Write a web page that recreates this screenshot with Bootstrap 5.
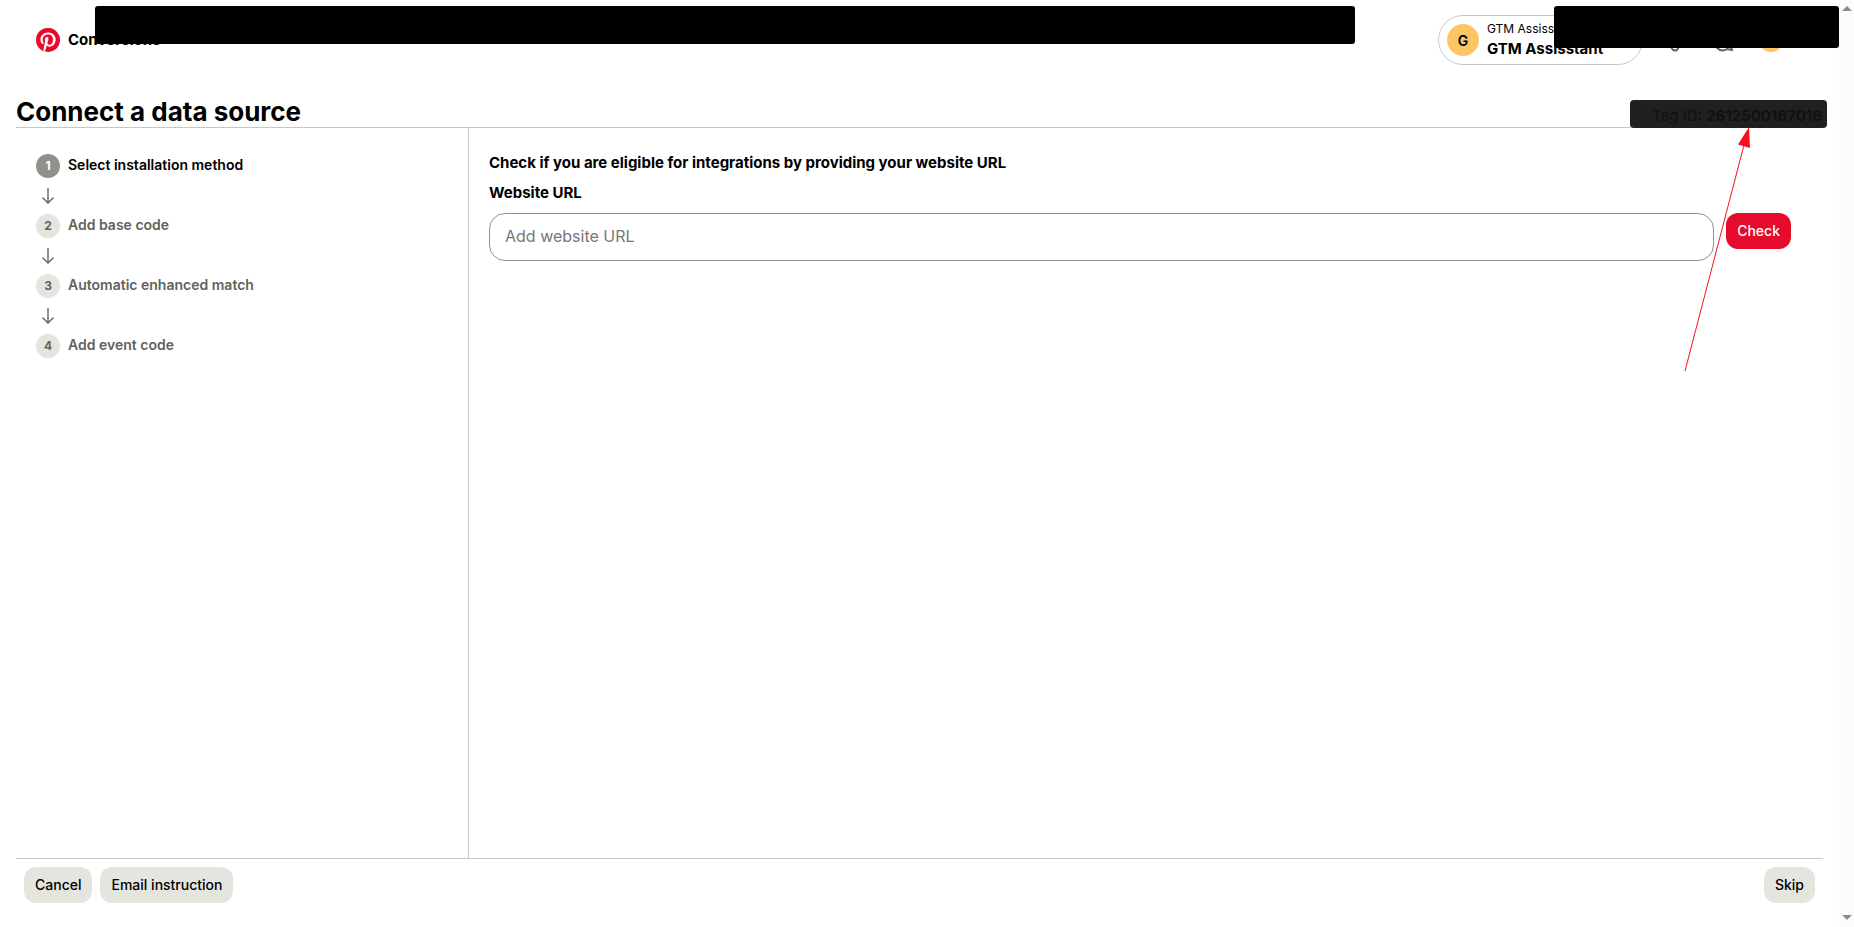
<!DOCTYPE html>
<html lang="en">
<head>
<meta charset="utf-8">
<meta name="viewport" content="width=device-width, initial-scale=1">
<title>Connect a data source</title>
<link href="https://cdn.jsdelivr.net/npm/bootstrap@5.3.0/dist/css/bootstrap.min.css" rel="stylesheet">
<style>
  :root { --line: #c8c8c1; --soft: #e5e5e0; --brand: #e60b2a; --sun: #fbc564; }
  body { font-family: "Inter", "Liberation Sans", sans-serif; color: #000; background: #fff; }
  .strong-text { font-size: 15px; font-weight: 700; line-height: 22px; }
  .topbar { height: 80px; padding-left: 36px; padding-right: 8px; gap: 20px; }
  .topbar-icons { gap: 24px; }
  .account { width: 205px; height: 50px; padding: 0 8px; border: 1px solid var(--line); border-radius: 25px; background: #fff; gap: 8px; }
  .avatar { width: 32px; height: 32px; background: var(--sun); font-size: 14px; font-weight: 600; }
  .avatar-sm { width: 24px; height: 24px; background: var(--sun); }
  .account-owner { font-size: 12px; line-height: 18px; }
  .cover { background: #000; border-radius: 3px; top: 6px; }
  .cover-nav { left: 95px; right: 484px; height: 38px; }
  .cover-user { right: 0; width: 285px; height: 42px; }
  .title-row { height: 48px; border-bottom: 1px solid var(--line); }
  .page-title { font-size: 26px; font-weight: 700; line-height: 30px; }
  .tag-id { width: 197px; height: 28px; margin: 0 -4px -1px 0; padding: 2px 5px 0 0; background: #202020; color: #111; border-radius: 4px; font-size: 15px; line-height: 28px; }
  .steps { width: 453px; padding: 26px 20px; border-right: 1px solid var(--line); }
  .step { height: 24px; font-size: 14px; font-weight: 600; line-height: 22px; color: #62625b; gap: 8px; }
  .step.current { color: #000; }
  .step-no { width: 24px; height: 24px; background: var(--soft); font-size: 12px; font-weight: 700; line-height: 24px; }
  .current .step-no { background: #91918c; color: #fff; }
  .step-arrow { width: 24px; margin: 10px 0; }
  .form-area { padding: 24px 32px 24px 20px; }
  .url-label { margin: 8px 0 9px; }
  .url-row { gap: 12px; }
  .url-input { height: 48px; padding: 0 15px 2px; border: 1px solid #91918c; border-radius: 16px; font-size: 16px; }
  .url-input::placeholder { color: #767676; }
  .action { height: 36px; padding: 0 11px 2px; border: 0; border-radius: 12px; font-size: 14px; font-weight: 500; background: var(--soft); color: #000; }
  .action-primary { background: var(--brand); color: #fff; }
  .actions { padding: 8px 8px 24px; border-top: 1px solid var(--line); }
  .scroll-rail { width: 15px; padding: 6px 0 7px; background: #fcfcfc; }
  .pointer { right: 88px; top: 127px; }
</style>
</head>
<body>
<div class="d-flex min-vh-100">
  <div class="d-flex flex-column flex-grow-1 position-relative">
    <header class="topbar d-flex align-items-center">
      <a href="#" class="d-flex align-items-center gap-2 me-auto text-reset text-decoration-none">
        <svg width="24" height="24" viewBox="0 0 24 24" aria-label="Pinterest" role="img"><circle cx="12" cy="12" r="11.5" fill="#fff"/><path fill="#e60b2a" d="M0 12c0 5.12 3.21 9.5 7.73 11.22-.11-.93-.22-2.47.02-3.55l1.4-5.96s-.35-.73-.35-1.78c0-1.66.96-2.9 2.16-2.9 1.02 0 1.51.76 1.51 1.68 0 1.02-.65 2.56-.99 3.97-.28 1.19.6 2.16 1.76 2.16 2.12 0 3.76-2.23 3.76-5.46 0-2.87-2.05-4.87-4.99-4.87-3.4 0-5.39 2.55-5.39 5.18 0 1.03.4 2.13.89 2.72a.36.36 0 0 1 .08.35l-.33 1.36c-.05.22-.17.27-.4.16-1.5-.69-2.43-2.88-2.43-4.64 0-3.77 2.74-7.24 7.9-7.24 4.14 0 7.37 2.96 7.37 6.9 0 4.12-2.6 7.44-6.2 7.44-1.21 0-2.35-.63-2.74-1.38l-.75 2.85c-.26 1.04-1 2.35-1.49 3.15A12 12 0 1 0 0 12"/></svg>
        <span class="strong-text">Conversions</span>
      </a>
      <button type="button" class="account d-flex align-items-center text-start text-reset">
        <span class="avatar rounded-circle d-flex align-items-center justify-content-center">G</span>
        <span class="d-flex flex-column text-nowrap">
          <span class="account-owner">GTM Assisstant</span>
          <span class="strong-text">GTM Assisstant</span>
        </span>
      </button>
      <div class="topbar-icons d-flex align-items-center">
        <svg width="24" height="24" viewBox="0 0 24 24" fill="none" stroke="#62625b" stroke-width="2" aria-hidden="true"><path d="M4 17c2-2 2-4 2-8a6 6 0 0 1 12 0c0 4 0 6 2 8zM8.500 18.500v0a3.500 4 0 0 0 7 0"/></svg>
        <svg width="24" height="24" viewBox="0 0 24 24" fill="none" stroke="#62625b" stroke-width="2" aria-hidden="true"><path d="M20 18a10 9 0 1 0-15 1c4 4 8 4 11 2l5 1z"/></svg>
        <span class="avatar-sm rounded-circle"></span>
        <svg width="24" height="24" viewBox="0 0 24 24" fill="none" stroke="#62625b" stroke-width="2" aria-hidden="true"><path d="m7 10 5 5 5-5"/></svg>
      </div>
    </header>
    <div class="cover cover-nav position-absolute"></div>
    <div class="cover cover-user position-absolute"></div>

    <div class="title-row d-flex align-items-end justify-content-between mx-3">
      <h1 class="page-title m-0">Connect a data source</h1>
      <div class="tag-id text-end text-nowrap">Tag ID: <strong>2612500167016</strong></div>
    </div>

    <main class="d-flex flex-grow-1 mx-3">
      <nav class="steps flex-shrink-0" aria-label="Setup steps">
        <div class="step current d-flex"><span class="step-no rounded-circle text-center">1</span>Select installation method</div>
        <div class="step-arrow d-flex justify-content-center"><svg width="14" height="16" viewBox="0 0 14 16" fill="none" stroke="#6f6f69" stroke-width="1.500"><path d="M7 0v15M1.500 9.500 7 15l5.500-5.500"/></svg></div>
        <div class="step d-flex"><span class="step-no rounded-circle text-center">2</span>Add base code</div>
        <div class="step-arrow d-flex justify-content-center"><svg width="14" height="16" viewBox="0 0 14 16" fill="none" stroke="#6f6f69" stroke-width="1.500"><path d="M7 0v15M1.500 9.500 7 15l5.500-5.500"/></svg></div>
        <div class="step d-flex"><span class="step-no rounded-circle text-center">3</span>Automatic enhanced match</div>
        <div class="step-arrow d-flex justify-content-center"><svg width="14" height="16" viewBox="0 0 14 16" fill="none" stroke="#6f6f69" stroke-width="1.500"><path d="M7 0v15M1.500 9.500 7 15l5.500-5.500"/></svg></div>
        <div class="step d-flex"><span class="step-no rounded-circle text-center">4</span>Add event code</div>
      </nav>
      <section class="form-area flex-grow-1">
        <h2 class="strong-text m-0">Check if you are eligible for integrations by providing your website URL</h2>
        <label class="strong-text url-label d-block" for="site-url">Website URL</label>
        <div class="url-row d-flex align-items-start">
          <input id="site-url" type="url" class="form-control url-input" placeholder="Add website URL">
          <button type="button" class="action action-primary">Check</button>
        </div>
      </section>
    </main>

    <footer class="actions d-flex gap-2 mx-3">
      <button type="button" class="action">Cancel</button>
      <button type="button" class="action">Email instruction</button>
      <button type="button" class="action ms-auto">Skip</button>
    </footer>

    <svg class="pointer position-absolute pe-none" width="68" height="244" viewBox="0 0 68 244" aria-hidden="true"><path d="M2 244 61 18" stroke="#ff0d1e" stroke-width="1"/><path d="M66 0 55 17.500 67 21z" fill="#ff0d1e"/></svg>
  </div>
  <div class="scroll-rail d-flex flex-column justify-content-between align-items-center flex-shrink-0" aria-hidden="true">
    <svg width="10" height="5" viewBox="0 0 10 5"><path d="M5 0 10 5H0z" fill="#8b8b8b"/></svg>
    <svg width="10" height="5" viewBox="0 0 10 5"><path d="M5 5 10 0H0z" fill="#8b8b8b"/></svg>
  </div>
</div>
<script src="https://cdn.jsdelivr.net/npm/bootstrap@5.3.0/dist/js/bootstrap.bundle.min.js"></script>
</body>
</html>
